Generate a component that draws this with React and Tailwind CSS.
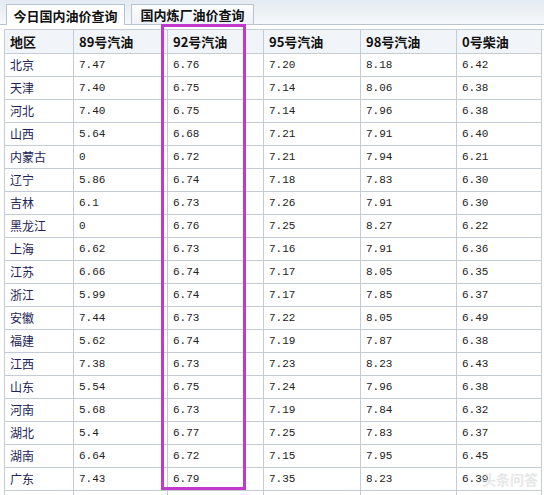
import React from 'react'

const rows = [
  ['北京', '7.47', '6.76', '7.20', '8.18', '6.42'],
  ['天津', '7.40', '6.75', '7.14', '8.06', '6.38'],
  ['河北', '7.40', '6.75', '7.14', '7.96', '6.38'],
  ['山西', '5.64', '6.68', '7.21', '7.91', '6.40'],
  ['内蒙古', '0', '6.72', '7.21', '7.94', '6.21'],
  ['辽宁', '5.86', '6.74', '7.18', '7.83', '6.30'],
  ['吉林', '6.1', '6.73', '7.26', '7.91', '6.30'],
  ['黑龙江', '0', '6.76', '7.25', '8.27', '6.22'],
  ['上海', '6.62', '6.73', '7.16', '7.91', '6.36'],
  ['江苏', '6.66', '6.74', '7.17', '8.05', '6.35'],
  ['浙江', '5.99', '6.74', '7.17', '7.85', '6.37'],
  ['安徽', '7.44', '6.73', '7.22', '8.05', '6.49'],
  ['福建', '5.62', '6.74', '7.19', '7.87', '6.38'],
  ['江西', '7.38', '6.73', '7.23', '8.23', '6.43'],
  ['山东', '5.54', '6.75', '7.24', '7.96', '6.38'],
  ['河南', '5.68', '6.73', '7.19', '7.84', '6.32'],
  ['湖北', '5.4', '6.77', '7.25', '7.83', '6.37'],
  ['湖南', '6.64', '6.72', '7.15', '7.95', '6.45'],
  ['广东', '7.43', '6.79', '7.35', '8.23', '6.39'],
  ['', '', '', '', '', ''],
]

const heads = ['地区', '89号汽油', '92号汽油', '95号汽油', '98号汽油', '0号柴油']

const cjk = "font-['Noto_Sans_CJK_SC',sans-serif]"
const mono = "font-['Liberation_Mono','Noto_Sans_CJK_SC',monospace]"

export default function App() {
  return (
    <div className={`relative w-[544px] h-[495px] overflow-hidden bg-white ${cjk}`}>
      {/* tabs */}
      <div className="flex items-end gap-[6px] h-[25px] pl-[6px] border-b border-[#b9c3cf] bg-gradient-to-b from-[#e4eaf2] to-[#f5f8fb]">
        <div className="flex items-center justify-center w-[119px] h-[21px] -mb-px bg-white border border-b-0 border-[#b9c3cf] text-[13px] font-bold text-[#111] leading-none">
          今日国内油价查询
        </div>
        <div className="flex items-center justify-center w-[123px] h-[20px] bg-gradient-to-b from-[#fbfcfe] to-[#eef2f7] border border-b-0 border-[#b9c3cf] text-[13px] font-bold text-[#111] leading-none">
          国内炼厂油价查询
        </div>
      </div>

      {/* table */}
      <div className="mt-[4px] ml-[4px] grid grid-cols-[69px_94px_96px_97px_96px_85px] border-l border-t border-[#c6ccd5]">
        {heads.map((h) => (
          <div key={h} className="h-[24px] flex items-center pl-[5px] bg-[#f1f4f8] border-r border-b border-[#c6ccd5] text-[13px] font-bold text-[#111]">
            {h}
          </div>
        ))}
        {rows.map((r, i) =>
          r.map((c, j) => (
            <div
              key={i + '-' + j}
              className={`h-[23px] flex items-center pl-[5px] border-r border-b border-[#c6ccd5] ${
                j === 0 ? 'text-[12px] text-[#1d2455]' : `${mono} text-[11px] text-[#222]`
              }`}
            >
              {c}
            </div>
          ))
        )}
      </div>

      {/* highlight box */}
      <div className="absolute left-[161px] top-[24px] w-[85px] h-[466px] border-[3px] border-[#c437cc]" />

      {/* watermark */}
      <div className="absolute left-[482px] top-[469px] whitespace-nowrap text-[14px] font-bold text-[#e2e2e2] opacity-80">
        头条问答
      </div>
    </div>
  )
}
